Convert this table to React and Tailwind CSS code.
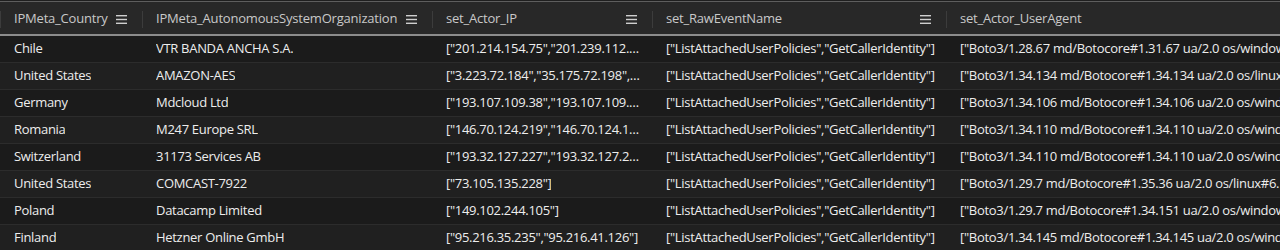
import React from 'react';

const columns = [
  { key: 'country', label: 'IPMeta_Country', width: 'w-[142px]' },
  { key: 'org', label: 'IPMeta_AutonomousSystemOrganization', width: 'w-[290px]' },
  { key: 'ip', label: 'set_Actor_IP', width: 'w-[220px]' },
  { key: 'event', label: 'set_RawEventName', width: 'w-[294px]' },
  { key: 'ua', label: 'set_Actor_UserAgent', width: 'flex-1' },
];

const EVENTS = '["ListAttachedUserPolicies","GetCallerIdentity"]';

const rows = [
  ['Chile', 'VTR BANDA ANCHA S.A.', '["201.214.154.75","201.239.112.54"]', EVENTS, '["Boto3/1.28.67 md/Botocore#1.31.67 ua/2.0 os/windows#10 md/arch#amd64"]'],
  ['United States', 'AMAZON-AES', '["3.223.72.184","35.175.72.198","44.1"]', EVENTS, '["Boto3/1.34.134 md/Botocore#1.34.134 ua/2.0 os/linux#6.1"]'],
  ['Germany', 'Mdcloud Ltd', '["193.107.109.38","193.107.109.141"]', EVENTS, '["Boto3/1.34.106 md/Botocore#1.34.106 ua/2.0 os/windows#10"]'],
  ['Romania', 'M247 Europe SRL', '["146.70.124.219","146.70.124.155"]', EVENTS, '["Boto3/1.34.110 md/Botocore#1.34.110 ua/2.0 os/windows#10"]'],
  ['Switzerland', '31173 Services AB', '["193.32.127.227","193.32.127.231"]', EVENTS, '["Boto3/1.34.110 md/Botocore#1.34.110 ua/2.0 os/windows#10"]'],
  ['United States', 'COMCAST-7922', '["73.105.135.228"]', EVENTS, '["Boto3/1.29.7 md/Botocore#1.35.36 ua/2.0 os/linux#6.1"]'],
  ['Poland', 'Datacamp Limited', '["149.102.244.105"]', EVENTS, '["Boto3/1.29.7 md/Botocore#1.34.151 ua/2.0 os/windows#10"]'],
  ['Finland', 'Hetzner Online GmbH', '["95.216.35.235","95.216.41.126"]', EVENTS, '["Boto3/1.34.145 md/Botocore#1.34.145 ua/2.0 os/windows#10"]'],
];

function MenuIcon() {
  return (
    <svg width="11" height="9" viewBox="0 0 11 9" className="shrink-0">
      <rect x="0" y="0" width="11" height="1.4" fill="#cfcfcf" />
      <rect x="0" y="3.8" width="11" height="1.4" fill="#cfcfcf" />
      <rect x="0" y="7.6" width="11" height="1.4" fill="#cfcfcf" />
    </svg>
  );
}

export default function App() {
  return (
    <div
      className="w-[1280px] h-[250px] overflow-hidden bg-[#1f1f1f] text-[13px]"
      style={{ fontFamily: '"Open Sans", "Noto Sans", sans-serif' }}
    >
      <div className="h-[3px] bg-[#282828] border-t border-[#5e5e5e] mt-px" />
      <div className="flex h-[32px] bg-[#282828] border-b-2 border-[#8c8c8c]">
        {columns.map((col, i) => (
          <div key={col.key} className={`${col.width} relative flex items-center shrink-0 pl-[14px] pr-[15px]`}>
            <span className="absolute left-0 top-[7px] h-[17px] w-px bg-[#3c3c3c]" />
            <span className="flex-1 truncate text-[#c9c9c9] tracking-[-0.2px]">{col.label}</span>
            {i < 4 && <MenuIcon />}
          </div>
        ))}
      </div>
      {rows.map((r, idx) => (
        <div
          key={idx}
          className={`flex h-[27px] border-b border-[#2c2c2c] ${idx % 2 === 0 ? 'bg-[#1b1b1b]' : 'bg-[#202020]'}`}
        >
          {columns.map((col, i) => (
            <div
              key={col.key}
              className={`${col.width} shrink-0 flex items-center pl-[14px] pr-[8px] overflow-hidden`}
            >
              <span className={`${i === 4 ? 'whitespace-nowrap' : 'truncate'} text-[#ededed] tracking-[-0.3px]`}>
                {r[i]}
              </span>
            </div>
          ))}
        </div>
      ))}
    </div>
  );
}
